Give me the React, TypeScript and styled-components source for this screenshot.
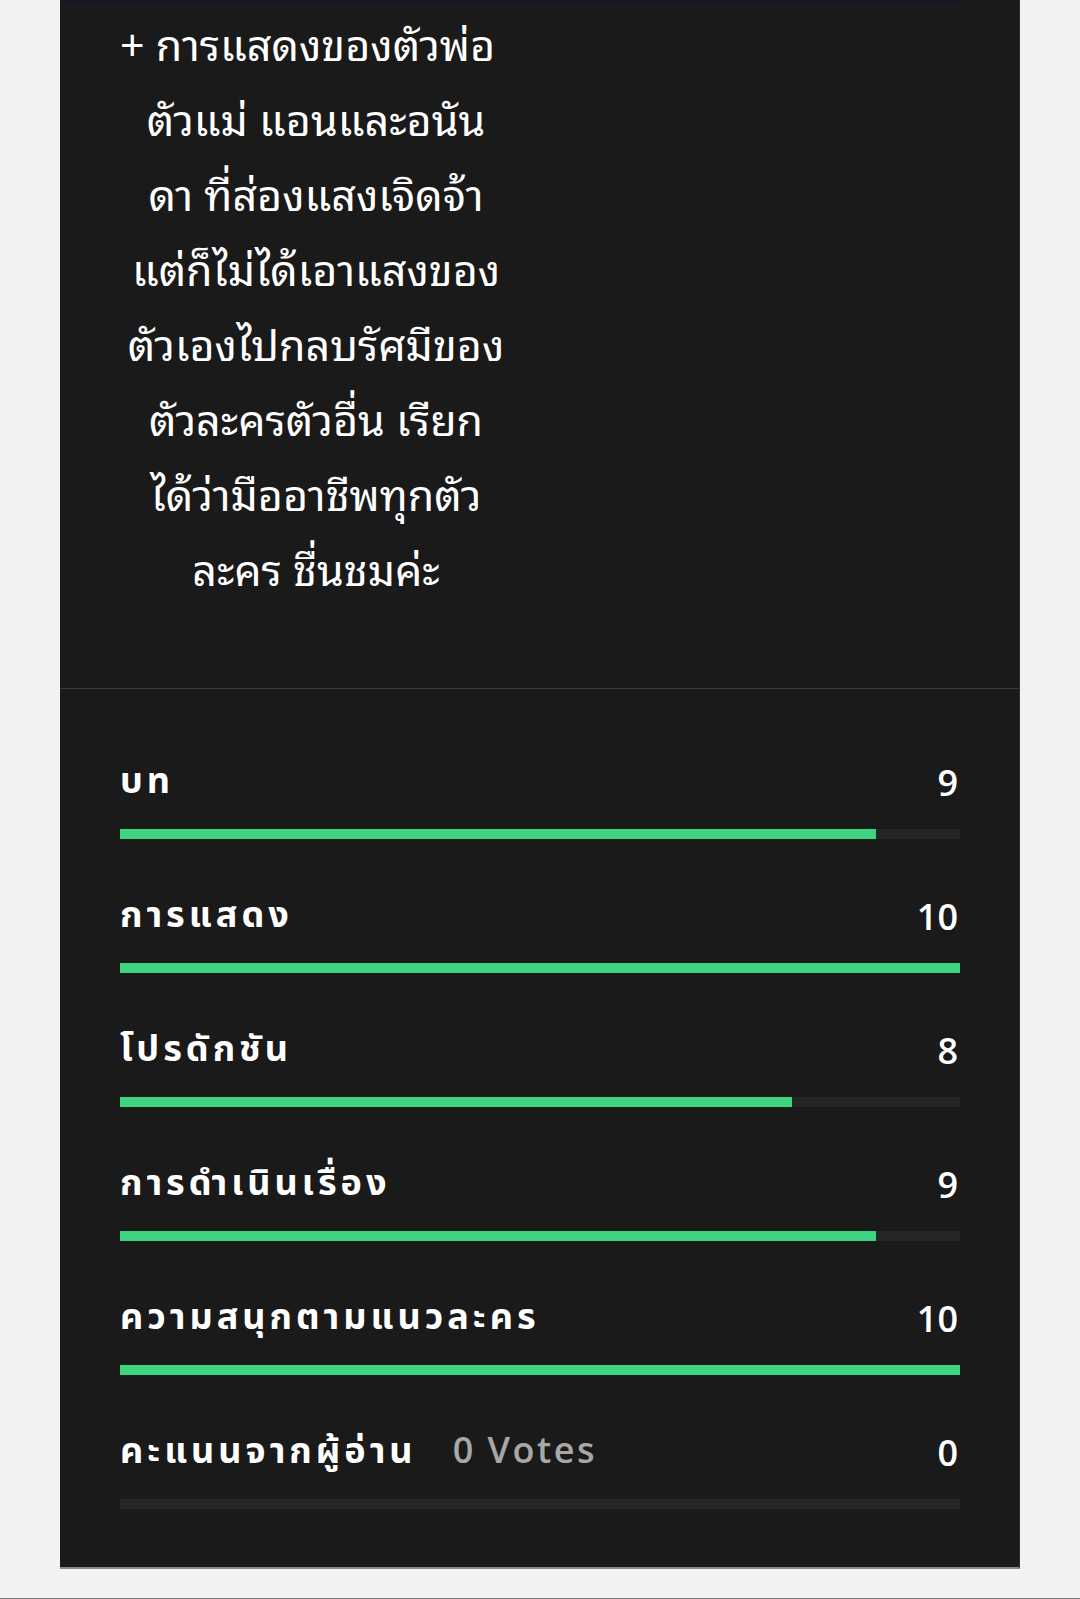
import styled, { createGlobalStyle } from "styled-components";

const GlobalStyle = createGlobalStyle`
  html, body {
    margin: 0;
    padding: 0;
    background: #f2f2f2;
  }
  body {
    font-family: "Noto Sans", "Open Sans", sans-serif;
  }
`;

const reviewLines = [
  "+ การแสดงของตัวพ่อ",
  "ตัวแม่ แอนและอนัน",
  "ดา ที่ส่องแสงเจิดจ้า",
  "แต่ก็ไม่ได้เอาแสงของ",
  "ตัวเองไปกลบรัศมีของ",
  "ตัวละครตัวอื่น เรียก",
  "ได้ว่ามืออาชีพทุกตัว",
  "ละคร ชื่นชมค่ะ",
];

const scores: { label: string; value: number; votes?: string }[] = [
  { label: "บท", value: 9 },
  { label: "การแสดง", value: 10 },
  { label: "โปรดักชัน", value: 8 },
  { label: "การดำเนินเรื่อง", value: 9 },
  { label: "ความสนุกตามแนวละคร", value: 10 },
  { label: "คะแนนจากผู้อ่าน", value: 0, votes: "0 Votes" },
];

export default function App() {
  return (
    <>
      <GlobalStyle />
      <Page>
        <Panel>
          <TopEdge />
          <Review>
            {reviewLines.map((line, i) => (
              <ReviewLine key={i} $lead={i === 0}>
                {line}
              </ReviewLine>
            ))}
          </Review>
          <Scores>
            {scores.map((s) => (
              <ScoreRow key={s.label}>
                <ScoreHead>
                  <ScoreLabel>
                    {s.label}
                    {s.votes && <Votes>{s.votes}</Votes>}
                  </ScoreLabel>
                  <ScoreValue>{s.value}</ScoreValue>
                </ScoreHead>
                <Track>
                  <Fill style={{ width: `${s.value * 10}%` }} />
                </Track>
              </ScoreRow>
            ))}
          </Scores>
        </Panel>
        <Footer />
      </Page>
    </>
  );
}

const Page = styled.div`
  display: flex;
  flex-direction: column;
  align-items: center;
  min-height: 1599px;
  background: #f2f2f2;
`;

const Panel = styled.section`
  width: 960px;
  background: #1a1a1a;
  border-right: 1px solid #2c2c2c;
  border-bottom: 2px solid #8a8a8a;
  box-sizing: border-box;
  display: flex;
  flex-direction: column;
`;

const TopEdge = styled.div`
  width: 907px;
  height: 3px;
  background: #141822;
`;

const Review = styled.div`
  width: 392px;
  margin-left: 60px;
  padding: 1px 0 84px;
  color: #ffffff;
  font-family: "Noto Sans Thai Looped", "Noto Sans Thai", "Noto Sans", sans-serif;
  font-size: 43px;
  font-stretch: 88%;
  line-height: 75px;
  font-weight: 400;
`;

const ReviewLine = styled.div<{ $lead?: boolean }>`
  text-align: center;
  white-space: nowrap;
  padding-right: ${(p) => (p.$lead ? "32px" : "0")};
`;

const Scores = styled.div`
  border-top: 1px solid #3a3a3a;
  padding: 63px 59px 58px 60px;
  display: flex;
  flex-direction: column;
  gap: 47px;
`;

const ScoreRow = styled.div`
  display: flex;
  flex-direction: column;
  gap: 17px;
`;

const ScoreHead = styled.div`
  display: flex;
  align-items: center;
  justify-content: space-between;
  height: 60px;
  color: #ffffff;
  font-family: "Open Sans", "Noto Sans Thai", sans-serif;
  font-weight: 700;
  font-size: 36px;
`;

const ScoreLabel = styled.span`
  letter-spacing: 4px;
  display: flex;
  align-items: baseline;
`;

const Votes = styled.span`
  margin-left: 36px;
  color: #a8a8a8;
  font-weight: 600;
  letter-spacing: 2.5px;
`;

const ScoreValue = styled.span`
  font-weight: 600;
  padding-right: 2px;
`;

const Track = styled.div`
  height: 10px;
  background: #262626;
`;

const Fill = styled.div`
  height: 100%;
  background: #3fd47f;
`;

const Footer = styled.div`
  margin-top: auto;
  width: 100%;
  height: 1px;
  background: #777777;
`;
